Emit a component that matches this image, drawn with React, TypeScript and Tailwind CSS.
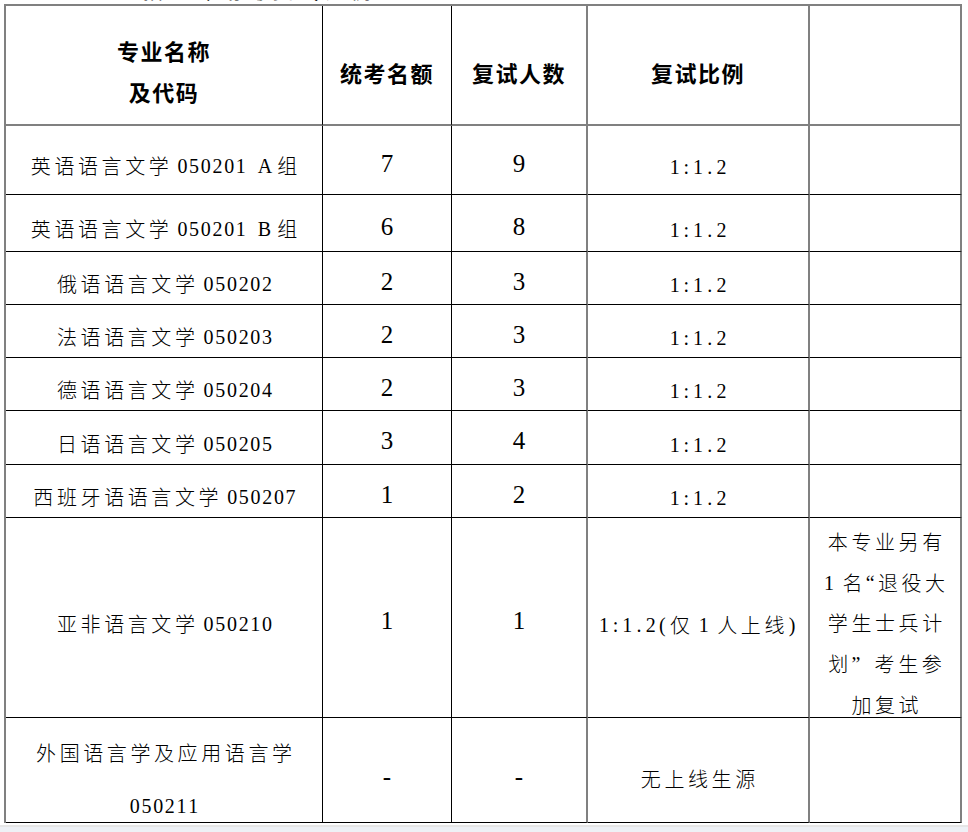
import clsx from 'clsx';

const isQuote = (c: string) => c === '“' || c === '”';
const isWide = (c: string) => !isQuote(c) && c.charCodeAt(0) > 0x2e7f;
const isAlnum = (c: string) => /[0-9A-Za-z]/.test(c);

// Word-like line: fixed CJK / half-width pitch, with autospace between CJK and latin
function Line({ text }: { text: string }) {
  const chars = Array.from(text);
  return (
    <span className="inline-flex whitespace-nowrap">
      {chars.map((c, i) => {
        if (c === ' ') return <span key={i} className="inline-block w-[11px]" />;
        const wide = isWide(c);
        const prev = chars[i - 1];
        const gap =
          prev !== undefined &&
          ((isAlnum(c) && isWide(prev)) || (wide && isAlnum(prev)));
        return (
          <span
            key={i}
            className={clsx(
              'inline-block text-center',
              wide
                ? "w-[23.6px] font-['Noto_Sans_CJK_SC',sans-serif] font-light"
                : "w-[11.7px] font-['Liberation_Serif',serif]",
              gap && 'ml-[6px]'
            )}
          >
            {c}
          </span>
        );
      })}
    </span>
  );
}

const body = 'text-[20px] text-black';
const num = "font-['Liberation_Serif',serif] text-[25px] leading-[30px] text-black";
const head = "font-['Noto_Sans_CJK_SC',sans-serif] text-[22px] font-bold tracking-[1.5px] text-black";

const cell = 'flex items-center justify-center border-b border-r border-black';
const grayR = 'border-r-2 border-r-[#808080]';
const grayB = 'border-b-2 border-b-[#808080]';

const rows = [
  ['英语语言文学050201 A组', '7', '9', '1:1.2'],
  ['英语语言文学050201 B组', '6', '8', '1:1.2'],
  ['俄语语言文学050202', '2', '3', '1:1.2'],
  ['法语语言文学050203', '2', '3', '1:1.2'],
  ['德语语言文学050204', '2', '3', '1:1.2'],
  ['日语语言文学050205', '3', '4', '1:1.2'],
  ['西班牙语语言文学050207', '1', '2', '1:1.2'],
];

const note = ['本专业另有', '1名“退役大', '学生士兵计', '划” 考生参', '加复试'];

export default function App() {
  return (
    <div className="flex h-[832px] flex-col overflow-hidden bg-white">
      {/* clipped line of the previous paragraph */}
      <div className="h-[4px] overflow-hidden">
        <div className="-mt-[19px] pl-[143px] font-['Noto_Sans_CJK_SC',sans-serif] text-[20px] leading-[20px] tracking-[6px] text-black">
          招生计划与复试比例
        </div>
      </div>

      <div className="ml-[4px] grid w-fit grid-cols-[317px_129px_136px_222px_152px] grid-rows-[120px_69px_57px_53px_53px_53px_54px_53px_200px_105px] border-l-2 border-t-2 border-[#808080]">
        {/* header */}
        <div className={clsx(cell, grayB, 'items-start pt-[24px]')}>
          <div className={clsx(head, 'text-center leading-[41px]')}>
            专业名称
            <br />
            及代码
          </div>
        </div>
        <div className={clsx(cell, grayB, 'pt-[14px]')}>
          <span className={clsx(head, 'leading-[30px]')}>统考名额</span>
        </div>
        <div className={clsx(cell, grayB, grayR, 'pt-[14px]')}>
          <span className={clsx(head, 'leading-[30px]')}>复试人数</span>
        </div>
        <div className={clsx(cell, grayB, grayR, 'pt-[14px]')}>
          <span className={clsx(head, 'leading-[30px]')}>复试比例</span>
        </div>
        <div className={clsx(cell, grayB, grayR)} />

        {/* body rows */}
        {rows.map(([name, quota, retest, ratio]) => (
          <div key={name} className="contents">
            <div className={clsx(cell, 'pt-[13px]')}>
              <span className={clsx(body, 'leading-[28px]')}>
                <Line text={name} />
              </span>
            </div>
            <div className={clsx(cell, 'pt-[7px]')}>
              <span className={num}>{quota}</span>
            </div>
            <div className={clsx(cell, grayR, 'pt-[7px]')}>
              <span className={num}>{retest}</span>
            </div>
            <div className={clsx(cell, grayR, 'pt-[14px]')}>
              <span className={clsx(body, 'leading-[28px]')}>
                <Line text={ratio} />
              </span>
            </div>
            <div className={clsx(cell, grayR)} />
          </div>
        ))}

        {/* 亚非语言文学 */}
        <div className={clsx(cell, 'pt-[14px]')}>
          <span className={clsx(body, 'leading-[28px]')}>
            <Line text="亚非语言文学050210" />
          </span>
        </div>
        <div className={clsx(cell, 'pt-[7px]')}>
          <span className={num}>1</span>
        </div>
        <div className={clsx(cell, grayR, 'pt-[7px]')}>
          <span className={num}>1</span>
        </div>
        <div className={clsx(cell, grayR, 'pt-[14px]')}>
          <span className={clsx(body, 'leading-[28px]')}>
            <Line text="1:1.2(仅1人上线)" />
          </span>
        </div>
        <div className={clsx(cell, grayR, 'flex-col items-center justify-start pt-[4px]')}>
          {note.map((l) => (
            <div key={l} className={clsx(body, 'leading-[40px]')}>
              <Line text={l} />
            </div>
          ))}
        </div>

        {/* 外国语言学及应用语言学 */}
        <div className={clsx(cell, 'flex-col items-center justify-start pt-[9px]')}>
          <div className={clsx(body, 'leading-[52px]')}>
            <Line text="外国语言学及应用语言学" />
          </div>
          <div className={clsx(body, 'leading-[52px]')}>
            <Line text="050211" />
          </div>
        </div>
        <div className={clsx(cell, 'pt-[14px]')}>
          <span className={clsx(num, 'text-[22px]')}>-</span>
        </div>
        <div className={clsx(cell, grayR, 'pt-[14px]')}>
          <span className={clsx(num, 'text-[22px]')}>-</span>
        </div>
        <div className={clsx(cell, grayR, 'pt-[18px]')}>
          <span className={clsx(body, 'leading-[28px]')}>
            <Line text="无上线生源" />
          </span>
        </div>
        <div className={clsx(cell, grayR)} />
      </div>

      <div className="mt-[2px] flex-1 border-t-2 border-[#e6e6e6] bg-[#eef1f6]" />
    </div>
  );
}
